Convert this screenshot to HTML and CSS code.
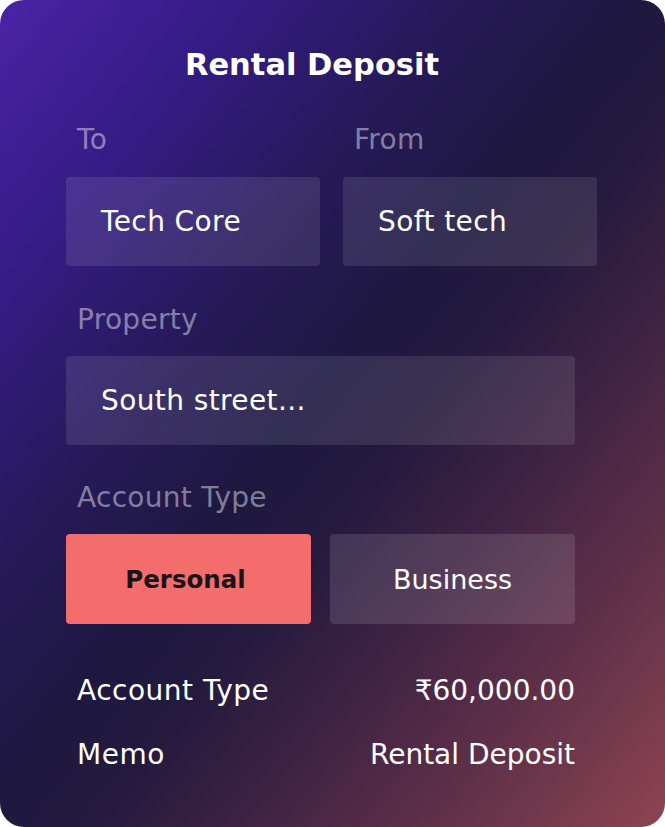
FILE: index.html
```html
<!DOCTYPE html>
<html>
<head>
<meta charset="utf-8">
<link rel="stylesheet" href="styles.css">
</head>
<body>
<div class="card">
  <h1 class="title">Rental Deposit</h1>
  <div class="pair">
    <div class="field">
      <div class="label">To</div>
      <div class="box">Tech Core</div>
    </div>
    <div class="field">
      <div class="label">From</div>
      <div class="box">Soft tech</div>
    </div>
  </div>
  <div class="field property">
    <div class="label">Property</div>
    <div class="box">South street...</div>
  </div>
  <div class="field account">
    <div class="label">Account Type</div>
    <div class="toggle">
      <div class="opt active">Personal</div>
      <div class="opt">Business</div>
    </div>
  </div>
  <div class="summary">
    <div class="row"><span>Account Type</span><span class="value">₹60,000.00</span></div>
    <div class="row"><span>Memo</span><span class="value">Rental Deposit</span></div>
  </div>
</div>
</body>
</html>
```
FILE: styles.css
```css
html, body {
  margin: 0;
  padding: 0;
  background: #ffffff;
}
body {
  font-family: "DejaVu Sans", "Open Sans", sans-serif;
  color: #ffffff;
}
.card {
  width: 665px;
  height: 827px;
  box-sizing: border-box;
  border-radius: 24px;
  overflow: hidden;
  padding: 44px 0 0 66px;
  background: linear-gradient(to bottom right, #4b23a6 0%, #341c84 18%, #261a5a 34%, #1e1840 48%, #231a3e 56%, #3e2244 68%, #5e3048 82%, #8e4452 100%);
}
.title {
  margin: 0 0 34px 0;
  padding-right: 107px;
  height: 40px;
  line-height: 42px;
  font-size: 30.5px;
  font-weight: 700;
  text-align: center;
}
.pair {
  display: flex;
  gap: 23px;
}
.pair .field {
  width: 254px;
}
.label {
  height: 40px;
  line-height: 43px;
  padding-left: 11px;
  font-size: 28px;
  letter-spacing: 0.3px;
  color: rgba(255, 255, 255, 0.45);
  margin-bottom: 19px;
}
.box {
  height: 89px;
  box-sizing: border-box;
  border-radius: 4px;
  background: rgba(255, 255, 255, 0.1);
  padding-left: 35px;
  display: flex;
  align-items: center;
  font-size: 28px;
  letter-spacing: 0.4px;
}
.property {
  margin-top: 32px;
  width: 509px;
}
.property .label {
  margin-bottom: 18px;
}
.account {
  margin-top: 31px;
  width: 509px;
}
.account .label {
  margin-bottom: 18px;
}
.toggle {
  display: flex;
  gap: 19px;
}
.opt {
  width: 245px;
  height: 90px;
  box-sizing: border-box;
  border-radius: 4px;
  background: rgba(255, 255, 255, 0.12);
  display: flex;
  align-items: center;
  justify-content: center;
  font-size: 27px;
}
.opt.active {
  background: #f26d6b;
  color: #1a1418;
  font-size: 24.5px;
  font-weight: 700;
  padding-right: 6px;
}
.summary {
  margin-top: 46px;
  width: 509px;
  display: flex;
  flex-direction: column;
  gap: 24px;
}
.row {
  height: 40px;
  line-height: 42px;
  display: flex;
  justify-content: space-between;
  padding-left: 11px;
  font-size: 28px;
  letter-spacing: 0.5px;
}
.value {
  letter-spacing: 0;
}
```
